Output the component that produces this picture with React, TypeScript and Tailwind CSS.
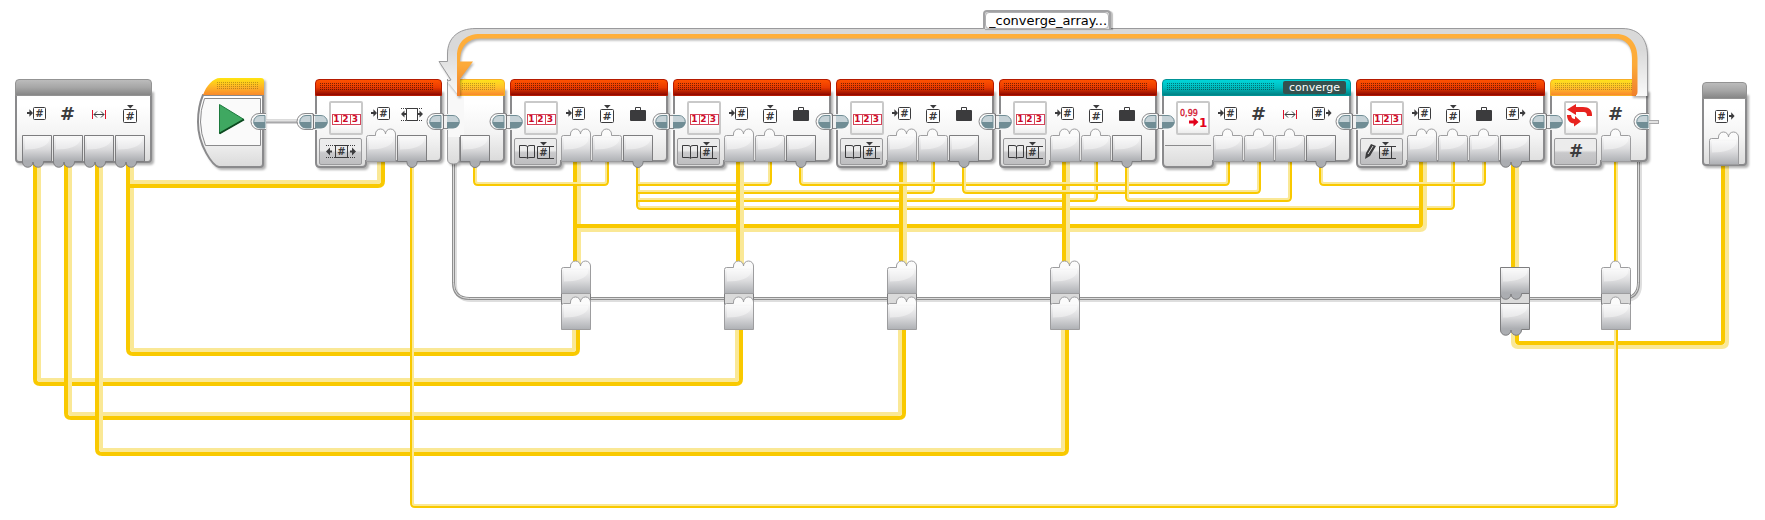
import React from "react";

type PortKind = "in" | "in2" | "out" | "out2";
type IconName = "arrayIn" | "arrayOut" | "index" | "value" | "range" | "number" | "length";
type Tone = "red" | "teal" | "yellow" | "gray";
type Port = { kind: PortKind; icon: IconName; label: string };
type Point = [number, number];
type Wire = { points: Point[]; thick?: boolean; side: 1 | -1 };

const PORT_OUTLINE: Record<PortKind, string> = {
  in: "M0.5 9.5 q0 -2 2 -2 H9.5 V6 a5 5 0 0 1 10 0 V7.5 H27.5 q2 0 2 2 V33.5 H0.5 Z",
  in2: "M0.5 9.5 q0 -2 2 -2 H9.5 V6 a5 5 0 0 1 10 0 a5 5 0 0 1 10 0 V33.5 H0.5 Z",
  out: "M0.5 7.5 H29.5 V33.5 H20 V34.5 a5 5 0 0 1 -10 0 V33.5 H0.5 Z",
  out2: "M0.5 7.5 H29.5 V33.5 H21.5 V34 a5 5 0 0 1 -10.5 0 a5 5 0 0 1 -10.5 0 Z",
};

function PortShape({ kind }: { kind: PortKind }) {
  const output = kind === "out" || kind === "out2";
  return (
    <svg className="block h-10 w-[31px] shrink-0 overflow-visible" aria-hidden="true">
      <path d={PORT_OUTLINE[kind]} fill={output ? "url(#portOut)" : "url(#portIn)"} stroke={output ? "#7d7d7f" : "#9d9d9f"} />
      <path d="M3 10 H27 V13 C25 18 16 21.5 3 21.5 Z" fill="#fff" opacity="0.4" />
    </svg>
  );
}

const INK = "#3b3b3d";

function Hash({ x, y, size }: { x: number; y: number; size: number }) {
  return (
    <text x={x} y={y} fontSize={size} textAnchor="middle" fontWeight="700" fill={INK} fontFamily="'DejaVu Sans', sans-serif">
      #
    </text>
  );
}

function Icon({ name }: { name: IconName }) {
  return (
    <svg className="block h-[32px] w-[31px] shrink-0 overflow-visible" aria-hidden="true">
      {name === "arrayIn" && (
        <>
          <path d="M5 16 h2.4 v-2.8 l3.6 3.8 l-3.6 3.8 v-2.8 h-2.4 Z" fill={INK} />
          <rect x="11.5" y="11.5" width="12" height="12" rx="1" fill="#fff" stroke={INK} />
          <Hash x={17.5} y={21} size={10} />
        </>
      )}
      {name === "arrayOut" && (
        <>
          <rect x="6.5" y="11.5" width="12" height="12" rx="1" fill="#fff" stroke={INK} />
          <Hash x={12.5} y={21} size={10} />
          <path d="M20 16 h2.2 v-2.8 l3.4 3.8 l-3.4 3.8 v-2.8 h-2.2 Z" fill={INK} />
        </>
      )}
      {name === "index" && (
        <>
          <path d="M12 9 h6.6 l-3.3 3.4 Z" fill={INK} />
          <rect x="8.5" y="13.5" width="13" height="13" rx="1" fill="#fff" stroke={INK} />
          <Hash x={15} y={24} size={11} />
        </>
      )}
      {name === "value" && (
        <>
          <rect x="7" y="14" width="16" height="11" rx="1" fill={INK} />
          <path d="M12.5 15 V11.5 H17.5 V15" fill="none" stroke={INK} />
        </>
      )}
      {name === "number" && <Hash x={14.5} y={24} size={18} />}
      {name === "range" && (
        <>
          <path d="M8.5 14 V23 M21.5 14 V23" stroke="#e0142c" />
          <path d="M10 18.5 H20 M13 15.5 L10 18.5 L13 21.5 M17 15.5 L20 18.5 L17 21.5" fill="none" stroke={INK} />
        </>
      )}
      {name === "length" && (
        <>
          <path d="M4 12.5 H26 M4 24.5 H26" stroke={INK} strokeDasharray="1 1" />
          <path d="M9.5 12.5 H20.5 V24.5 H9.5 Z" fill="#fff" stroke={INK} />
          <path d="M4 18 l3.5 -3.5 v2.5 h1.5 v2 h-1.5 v2.5 Z M26 18 l-3.5 -3.5 v2.5 h-1.5 v2 h1.5 v2.5 Z" fill={INK} />
        </>
      )}
    </svg>
  );
}

const HEADER: Record<Tone, string> = {
  red: "border-[#b51a00] bg-linear-to-b from-[#ff5200] via-[#ea3a00] to-[#8e0500]",
  teal: "border-[#009396] bg-linear-to-b from-[#00d6da] via-[#00bcbf] to-[#008285]",
  yellow: "border-[#f7ae25] bg-linear-to-b from-[#ffe21a] via-[#ffc02a] to-[#f98a2b]",
  gray: "border-[#939393] bg-linear-to-b from-[#bcbcbc] via-[#a6a6a6] to-[#868686]",
};

const DOTS: Record<Tone, string> = {
  red: "opacity-50",
  teal: "opacity-40",
  yellow: "opacity-25",
  gray: "opacity-0",
};

function Header({ tone, tag }: { tone: Tone; tag?: string }) {
  return (
    <div className={`relative flex h-[17px] items-center rounded-t border ${HEADER[tone]}`}>
      <div className="flex h-full grow pt-[3px] pr-2 pl-1">
        <svg className={`h-2 w-full ${DOTS[tone]}`} aria-hidden="true">
          <rect width="100%" height="100%" fill="url(#dots)" />
        </svg>
      </div>
      {tag && (
        <span className="mr-1 rounded-xs bg-[#34514f] px-[6px] text-[11px]/[13px] font-medium text-white">{tag}</span>
      )}
    </div>
  );
}

function NumbersGlyph() {
  return (
    <div className="mt-[11px] flex h-[11px] self-start border border-[#d5455a] text-[9px]/[9px] font-bold text-[#cc0a28]">
      {[1, 2, 3].map((n) => (
        <span key={n} className="w-[9px] border-r border-[#d5455a] text-center last:border-r-0">
          {n}
        </span>
      ))}
    </div>
  );
}

function RoundGlyph() {
  return (
    <svg className="h-full w-full" aria-hidden="true">
      <text x="2" y="13" fontSize="8" fill="#d3152f" stroke="#d3152f" strokeWidth="0.3" fontFamily="'DejaVu Sans', sans-serif">
        0,99
      </text>
      <path d="M11 17.5 h4.5 v-3 l5 4.5 l-5 4.5 v-3 h-4.5 Z" fill="#e2001a" />
      <text x="21" y="24" fontSize="12" fontWeight="700" fill="#e2001a" fontFamily="'DejaVu Sans', sans-serif">
        1
      </text>
    </svg>
  );
}

function LoopGlyph() {
  return (
    <svg className="h-full w-full" aria-hidden="true">
      <path d="M1 6.5 L10 1 V4 H17 C23 4 26.5 7 26 13 H21 C21 10 20 9 17 9 H10 V12 Z" fill="#e8231f" />
      <path d="M1 12 H5 C5.5 15 7 16 9 16 V13 L15 18.5 L8 23.5 V20.5 C3.5 20 1 17 1 12 Z" fill="#e8231f" />
    </svg>
  );
}

type Mode = "length" | "read" | "write" | "hash";

/** Array cell with a marker above and open rails on the right. */
function CellGlyph() {
  return (
    <>
      <path d="M3 3 h7 l-3.5 3.5 Z" fill={INK} />
      <path d="M0.5 7.5 H12.5 V19.5 H0.5 Z M12 7.5 H17 M12 19.5 H17" fill="none" stroke={INK} />
      <Hash x={6.5} y={17} size={10} />
    </>
  );
}

function ModeGlyph({ mode }: { mode: Mode }) {
  return (
    <svg className="h-[25px] w-[41px]" aria-hidden="true">
      {mode === "length" && (
        <>
          <path d="M6 6.5 H36 M6 18.5 H36" stroke={INK} strokeDasharray="1 1" />
          <rect x="15.5" y="6.5" width="12" height="12" fill="none" stroke={INK} />
          <Hash x={21.5} y={16} size={10} />
          <path d="M6 12.5 l4 -4 v3 h2 v2 h-2 v3 Z M36 12.5 l-4 -4 v3 h-2 v2 h2 v3 Z" fill={INK} />
        </>
      )}
      {mode === "read" && (
        <>
          <path
            d="M4.5 6.5 H10 Q12.5 6.5 12.5 8 Q12.5 6.5 15 6.5 H19.5 V18.5 H15 Q12.5 18.5 12.5 19.5 Q12.5 18.5 10 18.5 H4.5 Z M12.5 8 V19"
            fill="none"
            stroke={INK}
          />
          <g transform="translate(22 0)">
            <CellGlyph />
          </g>
        </>
      )}
      {mode === "write" && (
        <>
          <path d="M4 20 L5 14 L10 5 L15 7 L9 17 Z" fill={INK} />
          <path d="M7 15 L12 7" stroke="#d8d8d8" />
          <g transform="translate(18 0)">
            <CellGlyph />
          </g>
        </>
      )}
      {mode === "hash" && <Hash x={21} y={18} size={17} />}
    </svg>
  );
}

type BlockSpec = {
  x: number;
  width: number;
  tone: Tone;
  tag?: string;
  tile: "numbers" | "round" | "loop";
  mode?: Mode;
  modeLabel?: string;
  ports: Port[];
};

function Block({ x, width, tone, tag, tile, mode, modeLabel, ports }: BlockSpec) {
  return (
    <section className="absolute top-[79px]" style={{ left: x, width }}>
      <svg className="absolute inset-0 h-[89px] w-full overflow-visible drop-shadow-[2px_2px_1px_rgba(0,0,0,0.3)]" aria-hidden="true">
        <path
          d={`M1 12 V84 q0 4 4 4 H47 q4 0 4 -4 V82 H${width - 5} q4 0 4 -4 V12 Z`}
          fill="url(#body)"
          stroke="#8a8a8c"
          strokeWidth="2"
        />
      </svg>
      <Header tone={tone} tag={tag} />
      <div className="relative flex">
        <div className="flex w-[51px] flex-col pl-1">
          <div className="mt-[5px] ml-[10px] flex h-[34px] w-[34px] justify-center rounded-xs border-2 border-[#c9c9c9] bg-linear-to-b from-white from-75% to-[#ececec]">
            {tile === "numbers" && <NumbersGlyph />}
            {tile === "round" && <RoundGlyph />}
            {tile === "loop" && <LoopGlyph />}
          </div>
          {mode ? (
            <button
              type="button"
              aria-label={modeLabel}
              className="mt-[3px] h-[27px] w-[43px] rounded-xs border border-[#9a9a9c] bg-linear-to-b from-[#ececec] from-45% via-[#c9c9cb] via-55% to-[#bebec0]"
            >
              <ModeGlyph mode={mode} />
            </button>
          ) : (
            <div className="mt-[10px] -ml-px h-px w-[46px] bg-[#8a8a8c]" />
          )}
        </div>
        {ports.map((port) => (
          <div key={port.label} className="flex flex-col" title={port.label}>
            <Icon name={port.icon} />
            <PortShape kind={port.kind} />
          </div>
        ))}
      </div>
    </section>
  );
}

function ParameterBlock({ x, y, width, ports }: { x: number; y: number; width: number; ports: Port[] }) {
  return (
    <section className="absolute" style={{ left: x, top: y, width }}>
      <svg className="absolute inset-0 h-[84px] w-full overflow-visible drop-shadow-[2px_2px_1px_rgba(0,0,0,0.3)]" aria-hidden="true">
        <path d={`M1 12 V80 q0 3 3 3 H${width - 4} q3 0 3 -3 V12 Z`} fill="url(#body)" stroke="#8a8a8c" strokeWidth="2" />
      </svg>
      <Header tone="gray" />
      <div className="relative flex pl-[7px]">
        {ports.map((port) => (
          <div key={port.label} title={port.label}>
            <Icon name={port.icon} />
            <PortShape kind={port.kind} />
          </div>
        ))}
      </div>
    </section>
  );
}

function StartBlock() {
  return (
    <section className="absolute top-[78px] left-[197px]" aria-label="Start">
      <svg className="block h-[90px] w-[68px] overflow-visible drop-shadow-[2px_2px_1px_rgba(0,0,0,0.3)]" aria-hidden="true">
        <path d="M66 17 V86 q0 3 -3 3 H22 C16 88 1 68 1 44 C1 34 3 24 6 17 Z" fill="url(#body)" stroke="#8a8a8c" strokeWidth="2" />
        <path d="M67 17 V3 q0 -3 -3 -3 H23 C16 0 9 8 6 17 Z" fill="url(#yellow)" />
        <path d="M7.5 20.5 H63.5 V67.5 H8.5 Q-1 44 7.5 20.5 Z" fill="#fafafa" stroke="#8a8a8c" />
        <rect x="20" y="4" width="42" height="7" fill="url(#dots)" opacity="0.25" />
        <path d="M22.5 26.5 L47 41.5 L22.5 55.5 Z" fill="#3fa861" stroke="#1c7a3d" />
        <path d="M22.5 55.5 L47 41.5" stroke="#0d4a20" strokeWidth="2" />
      </svg>
    </section>
  );
}

function LoopStart() {
  return (
    <section className="absolute top-[79px] left-[447px] w-[58px]" aria-label="Loop start">
      <svg className="absolute inset-0 h-[86px] w-full overflow-visible drop-shadow-[2px_2px_1px_rgba(0,0,0,0.3)]" aria-hidden="true">
        <path d="M10 10 V82.5 H53 q4 0 4 -4 V10 Z" fill="url(#body)" stroke="#8a8a8c" strokeWidth="2" />
        <path d="M0.5 0 V80 q0 5 6 5 q6 0 6 -5 V17" fill="url(#body)" stroke="#9a9a9c" />
        <rect x="1" y="-2" width="16" height="60" fill="#f8f8f8" />
      </svg>
      <div className="pl-[10px]">
        <Header tone="yellow" />
      </div>
      <div className="relative mt-8 pl-[13px]">
        <PortShape kind="out" />
      </div>
    </section>
  );
}

function Tunnel({ x, kind }: { x: number; kind: PortKind }) {
  return (
    <div className="absolute top-[260px] flex flex-col" style={{ left: x }}>
      <div className="absolute top-8 h-[14px] w-[30px] border-x border-[#7d7d7f] bg-[#dadada]" />
      <div className="relative h-9">
        <PortShape kind={kind} />
      </div>
      <div className="relative h-9">
        <PortShape kind={kind} />
      </div>
    </div>
  );
}

const arr = (kind: PortKind = "in2"): Port => ({ kind, icon: "arrayIn", label: "Array In" });
const readPorts: Port[] = [
  arr(),
  { kind: "in", icon: "index", label: "Index" },
  { kind: "out", icon: "value", label: "Value" },
];

const read = (x: number): BlockSpec => ({
  x,
  width: 158,
  tone: "red",
  tile: "numbers",
  mode: "read",
  modeLabel: "Read at index",
  ports: readPorts,
});

const BLOCKS: BlockSpec[] = [
  {
    x: 315,
    width: 127,
    tone: "red",
    tile: "numbers",
    mode: "length",
    modeLabel: "Length",
    ports: [arr(), { kind: "out", icon: "length", label: "Length" }],
  },
  read(510),
  read(673),
  read(836),
  read(999),
  {
    x: 1162,
    width: 189,
    tone: "teal",
    tag: "converge",
    tile: "round",
    ports: [
      arr("in"),
      { kind: "in", icon: "number", label: "Number" },
      { kind: "in", icon: "range", label: "Range" },
      { kind: "out", icon: "arrayOut", label: "Result" },
    ],
  },
  {
    x: 1356,
    width: 189,
    tone: "red",
    tile: "numbers",
    mode: "write",
    modeLabel: "Write at index",
    ports: [
      arr(),
      { kind: "in", icon: "index", label: "Index" },
      { kind: "in", icon: "value", label: "Value" },
      { kind: "out2", icon: "arrayOut", label: "Array Out" },
    ],
  },
  {
    x: 1550,
    width: 98,
    tone: "yellow",
    tile: "loop",
    mode: "hash",
    modeLabel: "Count",
    ports: [{ kind: "in", icon: "number", label: "Count" }],
  },
];

const INPUT_PORTS: Port[] = [
  { kind: "out2", icon: "arrayIn", label: "Array" },
  { kind: "out2", icon: "number", label: "Number" },
  { kind: "out2", icon: "range", label: "Range" },
  { kind: "out2", icon: "index", label: "Index" },
];

const OUTPUT_PORTS: Port[] = [{ kind: "in2", icon: "arrayOut", label: "Array Out" }];

const JOINTS: Point[] = [
  [312, 315],
  [442, 447],
  [505, 510],
  [668, 673],
  [831, 836],
  [994, 999],
  [1157, 1162],
  [1351, 1356],
  [1545, 1550],
];

const TUNNELS: { x: number; kind: PortKind }[] = [
  { x: 561, kind: "in2" },
  { x: 724, kind: "in2" },
  { x: 887, kind: "in2" },
  { x: 1050, kind: "in2" },
  { x: 1500, kind: "out2" },
  { x: 1601, kind: "in" },
];

// side: which side of the direction of travel carries the saturated stripe (1 = right, -1 = left)
const WIRES: Wire[] = [
  { points: [[37, 160], [37, 382], [739, 382], [739, 325]], thick: true, side: 1 },
  { points: [[68, 160], [68, 416], [902, 416], [902, 325]], thick: true, side: 1 },
  { points: [[99, 160], [99, 452], [1065, 452], [1065, 325]], thick: true, side: 1 },
  { points: [[130, 160], [130, 352], [576, 352], [576, 325]], thick: true, side: 1 },
  { points: [[130, 184], [381, 184], [381, 155]], thick: true, side: 1 },
  { points: [[638, 160], [638, 208], [1453, 208], [1453, 155]], side: 1 },
  { points: [[638, 184], [770, 184], [770, 155]], side: 1 },
  { points: [[638, 192], [933, 192], [933, 155]], side: 1 },
  { points: [[638, 200], [1096, 200], [1096, 155]], side: 1 },
  { points: [[577, 155], [577, 265]], thick: true, side: 1 },
  { points: [[577, 228], [1423, 228], [1423, 155]], thick: true, side: -1 },
  { points: [[740, 155], [740, 265]], thick: true, side: 1 },
  { points: [[903, 155], [903, 265]], thick: true, side: 1 },
  { points: [[1066, 155], [1066, 265]], thick: true, side: 1 },
  { points: [[475, 160], [475, 184], [607, 184], [607, 155]], side: 1 },
  { points: [[801, 160], [801, 184], [1228, 184], [1228, 155]], side: 1 },
  { points: [[964, 160], [964, 192], [1259, 192], [1259, 155]], side: 1 },
  { points: [[1127, 160], [1127, 200], [1290, 200], [1290, 155]], side: 1 },
  { points: [[1321, 160], [1321, 184], [1484, 184], [1484, 155]], side: 1 },
  { points: [[1515, 160], [1515, 270]], thick: true, side: 1 },
  { points: [[1515, 325], [1515, 345], [1725, 345], [1725, 155]], thick: true, side: -1 },
  { points: [[1616, 155], [1616, 265]], side: 1 },
  { points: [[412, 160], [412, 506], [1616, 506], [1616, 325]], side: 1 },
];

const direction = (a: Point, b: Point): Point => [Math.sign(b[0] - a[0]), Math.sign(b[1] - a[1])];

/** Shifts an axis-aligned polyline sideways and rounds its corners. */
function wirePath(points: Point[], shift: number, radius: number): string {
  const last = points.length - 1;
  const moved = points.map((p, i): Point => {
    const before = i > 0 ? direction(points[i - 1], p) : null;
    const after = i < last ? direction(p, points[i + 1]) : null;
    const normals = [before, after].filter((d): d is Point => d !== null).map((d): Point => [-d[1], d[0]]);
    const nx = normals.reduce((sum, n) => sum + n[0], 0);
    const ny = normals.reduce((sum, n) => sum + n[1], 0);
    return [p[0] + nx * shift, p[1] + ny * shift];
  });
  return moved
    .map((p, i) => {
      if (i === 0) return `M${p[0]} ${p[1]}`;
      if (i === last) return `L${p[0]} ${p[1]}`;
      const a = direction(moved[i - 1], p);
      const b = direction(p, moved[i + 1]);
      return `L${p[0] - a[0] * radius} ${p[1] - a[1] * radius} Q${p[0]} ${p[1]} ${p[0] + b[0] * radius} ${p[1] + b[1] * radius}`;
    })
    .join(" ");
}

function WireLine({ points, thick, side }: Wire) {
  const w = thick ? 4 : 2;
  const outer = thick ? 5 : 4;
  return (
    <g fill="none" strokeWidth={w}>
      <path d={wirePath(points, (-side * w) / 2, side === 1 ? 2 : outer)} stroke="#fae896" />
      <path d={wirePath(points, (side * w) / 2, side === 1 ? outer : 2)} stroke="#f9c900" />
    </g>
  );
}

function Cap({ x }: { x: number }) {
  return (
    <g>
      <path d={`M${x} 113.5 H${x - 7} a8 8 0 0 0 0 16 H${x}`} fill="#f8f8f8" stroke="#8a8a8c" />
      <path d={`M${x - 1} 115.5 H${x - 6} a6 6 0 0 0 -6.5 6.5 H${x - 1} Z`} fill="#c6d2d7" />
      <path d={`M${x - 1} 122 H${x - 12.5} a6 6 0 0 0 6.5 6 H${x - 1} Z`} fill="#708d95" />
      <path d={`M${x - 1} 115.5 H${x - 6} a6 6 0 0 0 0 12.5 H${x - 1} Z`} fill="none" stroke="#708d95" />
    </g>
  );
}

function Joint({ from, to }: { from: number; to: number }) {
  return (
    <g>
      <rect x={from} y="114" width={to - from + 2} height="16" fill="#f0f0f0" />
      <path d={`M${from - 1} 113.5 h2 v2 H${to + 1} M${from - 1} 129.5 h2 v-1 H${to + 1}`} fill="none" stroke="#8a8a8c" />
      <path d={`M${from + 1.5} 114 V129`} stroke="#77777a" />
      <Cap x={from} />
      <path d={`M${to} 116 h6 a6 6 0 0 1 6.5 6 H${to} Z`} fill="#c6d2d7" />
      <path d={`M${to} 122 h12.5 a6 6 0 0 1 -6.5 6 H${to} Z`} fill="#708d95" />
      <path d={`M${to} 115.5 h6 a6 6 0 0 1 0 12.5 h-6`} fill="none" stroke="#708d95" />
    </g>
  );
}

function Defs() {
  return (
    <defs>
      <linearGradient id="body" x1="0" y1="0" x2="0" y2="1">
        <stop offset="0.2" stopColor="#ffffff" />
        <stop offset="0.6" stopColor="#f4f4f4" />
        <stop offset="1" stopColor="#dadada" />
      </linearGradient>
      <linearGradient id="yellow" x1="0" y1="0" x2="0" y2="1">
        <stop offset="0" stopColor="#ffe510" />
        <stop offset="0.5" stopColor="#ffb725" />
        <stop offset="1" stopColor="#f98a2b" />
      </linearGradient>
      <linearGradient id="portIn" x1="0" y1="0" x2="0" y2="1">
        <stop offset="0.2" stopColor="#fbfbfb" />
        <stop offset="0.6" stopColor="#dcdcde" />
        <stop offset="1" stopColor="#aeb0b4" />
      </linearGradient>
      <linearGradient id="portOut" x1="0" y1="0" x2="0" y2="1">
        <stop offset="0" stopColor="#fbfbfb" />
        <stop offset="0.45" stopColor="#d8d8da" />
        <stop offset="0.8" stopColor="#abadb1" />
        <stop offset="1" stopColor="#abadb1" />
      </linearGradient>
      <linearGradient id="leg" gradientUnits="userSpaceOnUse" x1="0" y1="50" x2="0" y2="96">
        <stop offset="0" stopColor="#d9d9d9" />
        <stop offset="1" stopColor="#fafafa" />
      </linearGradient>
      <linearGradient id="track" gradientUnits="userSpaceOnUse" x1="0" y1="34" x2="0" y2="96">
        <stop offset="0" stopColor="#ffaf3a" />
        <stop offset="0.5" stopColor="#fcaa3a" />
        <stop offset="1" stopColor="#f07f2b" />
      </linearGradient>
      <pattern id="dots" width="2" height="2" patternUnits="userSpaceOnUse">
        <rect width="1" height="1" fill="#000" />
      </pattern>
    </defs>
  );
}

function LoopTrack() {
  return (
    <svg className="pointer-events-none absolute inset-0 h-full w-full" aria-hidden="true">
      <g className="drop-shadow-[1px_2px_1px_rgba(0,0,0,0.3)]">
        <path
          d="M447 81 L451 80 L439 61.5 H447.5 V54 C447.5 38 458 28.5 476 28.5 H1622 C1640 28.5 1647.5 40 1647.5 56 V96 H1636 V58 C1636 44 1628 36 1614 36 H478 C466 36 459 44 459 56 V96 L447 81 Z"
          fill="url(#leg)"
        />
        <path
          d="M457 96 V56 C457 42 466 34 480 34 H1616 C1630 34 1637.5 44 1637.5 58 V92 q0 4 -4 4 H1632 V58 C1632 46 1626 38.5 1614 38.5 H480 C468 38.5 460 46 460 61.5 H473 L460 79 V96 Z"
          fill="url(#track)"
        />
      </g>
      <path
        d="M447.5 79 V81 L451 80 L439 61.5 H447.5 V54 C447.5 38 458 28.5 476 28.5 H1622 C1640 28.5 1647.5 40 1647.5 56 V96"
        fill="none"
        stroke="#9a9a9c"
      />
    </svg>
  );
}

const FRAME = "M453.5 160 V282.5 Q453.5 298.5 469.5 298.5 H1622.5 Q1638.5 298.5 1638.5 282.5 V155";

export default function App() {
  return (
    <main className="relative min-h-[520px] w-full overflow-hidden bg-white font-['DejaVu_Sans',sans-serif]">
      <svg className="absolute inset-0 h-full w-full" aria-hidden="true">
        <Defs />
        <g fill="none">
          <path d={FRAME} stroke="#dedede" strokeWidth="3" transform="translate(2 2)" />
          <path d={FRAME} stroke="#8f8f8f" strokeWidth="3" />
          <path d={FRAME} stroke="#dcdcdc" strokeWidth="1" />
        </g>
        {WIRES.map((wire, i) => (
          <WireLine key={i} {...wire} />
        ))}
      </svg>

      <ParameterBlock x={15} y={79} width={137} ports={INPUT_PORTS} />
      <StartBlock />
      {BLOCKS.map((block) => (
        <Block key={block.x} {...block} />
      ))}
      <LoopStart />
      <ParameterBlock x={1702} y={82} width={45} ports={OUTPUT_PORTS} />
      {TUNNELS.map((tunnel) => (
        <Tunnel key={tunnel.x} {...tunnel} />
      ))}

      <LoopTrack />

      <svg className="pointer-events-none absolute inset-0 h-full w-full" aria-hidden="true">
        <path d="M266 121.5 H298 M1648 122 H1659" stroke="#a9a9ab" strokeWidth="4" />
        <path d="M266 120.5 H298 M1648 122 H1658" stroke="#e2e2e2" strokeWidth="2" />
        <Cap x={266} />
        {JOINTS.map(([from, to]) => (
          <Joint key={from} from={from} to={to} />
        ))}
        <Cap x={1649} />
      </svg>

      <div className="absolute top-[10px] left-[983px] flex h-[19px] w-[128px] rounded-t border-2 border-b-0 border-[#a2a2a4] bg-[#dcdcdc] shadow-[2px_1px_1px_rgba(0,0,0,0.25)]">
        <input
          aria-label="Loop name"
          defaultValue="_converge_array..."
          className="w-full min-w-0 rounded-sm border border-[#b0b0b2] bg-white pl-[3px] text-[13px]/[15px] text-black outline-none"
        />
      </div>
    </main>
  );
}
